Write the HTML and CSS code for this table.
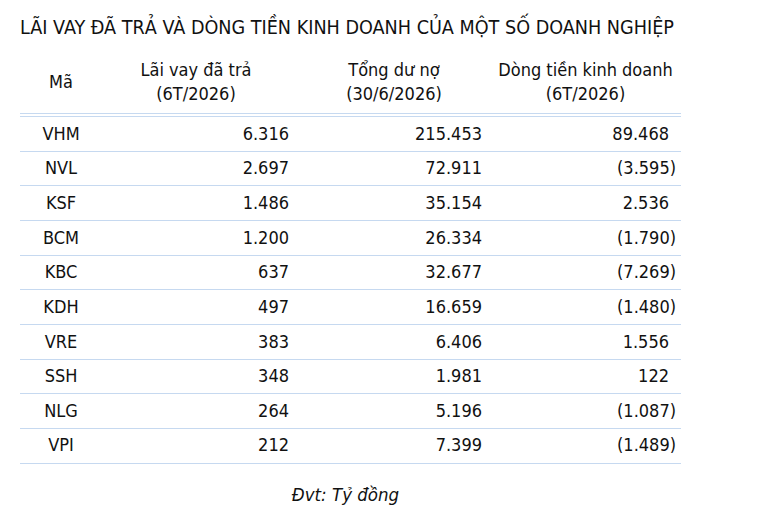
FILE: index.html
```html
<!DOCTYPE html>
<html lang="vi">
<head>
<meta charset="utf-8">
<link rel="stylesheet" href="styles.css">
</head>
<body>
<div class="page">
  <h1 class="title">LÃI VAY ĐÃ TRẢ VÀ DÒNG TIỀN KINH DOANH CỦA MỘT SỐ DOANH NGHIỆP</h1>
  <table class="data">
    <colgroup>
      <col class="w0">
      <col class="w1">
      <col class="w2">
      <col class="w3">
    </colgroup>
    <thead>
      <tr>
        <th class="c0">Mã</th>
        <th class="c1">Lãi vay đã trả<br>(6T/2026)</th>
        <th class="c2">Tổng dư nợ<br>(30/6/2026)</th>
        <th class="c3">Dòng tiền kinh doanh<br>(6T/2026)</th>
      </tr>
    </thead>
    <tbody>
      <tr><td class="c0">VHM</td><td class="c1">6.316</td><td class="c2">215.453</td><td class="c3 pos">89.468</td></tr>
      <tr><td class="c0">NVL</td><td class="c1">2.697</td><td class="c2">72.911</td><td class="c3">(3.595)</td></tr>
      <tr><td class="c0">KSF</td><td class="c1">1.486</td><td class="c2">35.154</td><td class="c3 pos">2.536</td></tr>
      <tr><td class="c0">BCM</td><td class="c1">1.200</td><td class="c2">26.334</td><td class="c3">(1.790)</td></tr>
      <tr><td class="c0">KBC</td><td class="c1">637</td><td class="c2">32.677</td><td class="c3">(7.269)</td></tr>
      <tr><td class="c0">KDH</td><td class="c1">497</td><td class="c2">16.659</td><td class="c3">(1.480)</td></tr>
      <tr><td class="c0">VRE</td><td class="c1">383</td><td class="c2">6.406</td><td class="c3 pos">1.556</td></tr>
      <tr><td class="c0">SSH</td><td class="c1">348</td><td class="c2">1.981</td><td class="c3 pos">122</td></tr>
      <tr><td class="c0">NLG</td><td class="c1">264</td><td class="c2">5.196</td><td class="c3">(1.087)</td></tr>
      <tr><td class="c0">VPI</td><td class="c1">212</td><td class="c2">7.399</td><td class="c3">(1.489)</td></tr>
    </tbody>
  </table>
  <p class="unit">Đvt: Tỷ đồng</p>
</div>
</body>
</html>
```
FILE: styles.css
```css
html, body {
  margin: 0;
  padding: 0;
  background: #ffffff;
}
body {
  font-family: "DejaVu Sans", "Liberation Sans", sans-serif;
  font-stretch: semi-condensed;
  color: #111111;
}
.page {
  padding: 17px 0 0 20px;
  width: 661px;
}
.title {
  margin: 0;
  font-size: 19.6px;
  font-weight: normal;
  line-height: 22px;
  white-space: nowrap;
}
.data {
  margin-top: 19px;
  border-collapse: collapse;
  width: 661px;
  table-layout: fixed;
  font-size: 18px;
}
.w0 { width: 82px; }
.w1 { width: 188px; }
.w2 { width: 208px; }
.w3 { width: 183px; }
.data th {
  font-weight: normal;
  text-align: center;
  line-height: 24px;
  padding: 0 0 7px 0;
  border-bottom: 4px double #c6d9f0;
  vertical-align: middle;
  white-space: nowrap;
}
.data th.c3 { padding-right: 8px; }
.data td {
  height: 32.17px;
  padding: 0 0 1.5px 0;
  border-bottom: 1px solid #c6d9f0;
  text-align: right;
}
.data td.c0 { text-align: center; }
.data td.c1 { padding-right: 1px; }
.data td.c2 { padding-right: 16px; }
.data td.c3 { padding-right: 5px; }
.data td.pos { padding-right: 12px; }
.unit {
  margin: 20px 0 0 0;
  text-align: center;
  font-style: italic;
  font-size: 18.5px;
  padding-right: 10px;
}
```
